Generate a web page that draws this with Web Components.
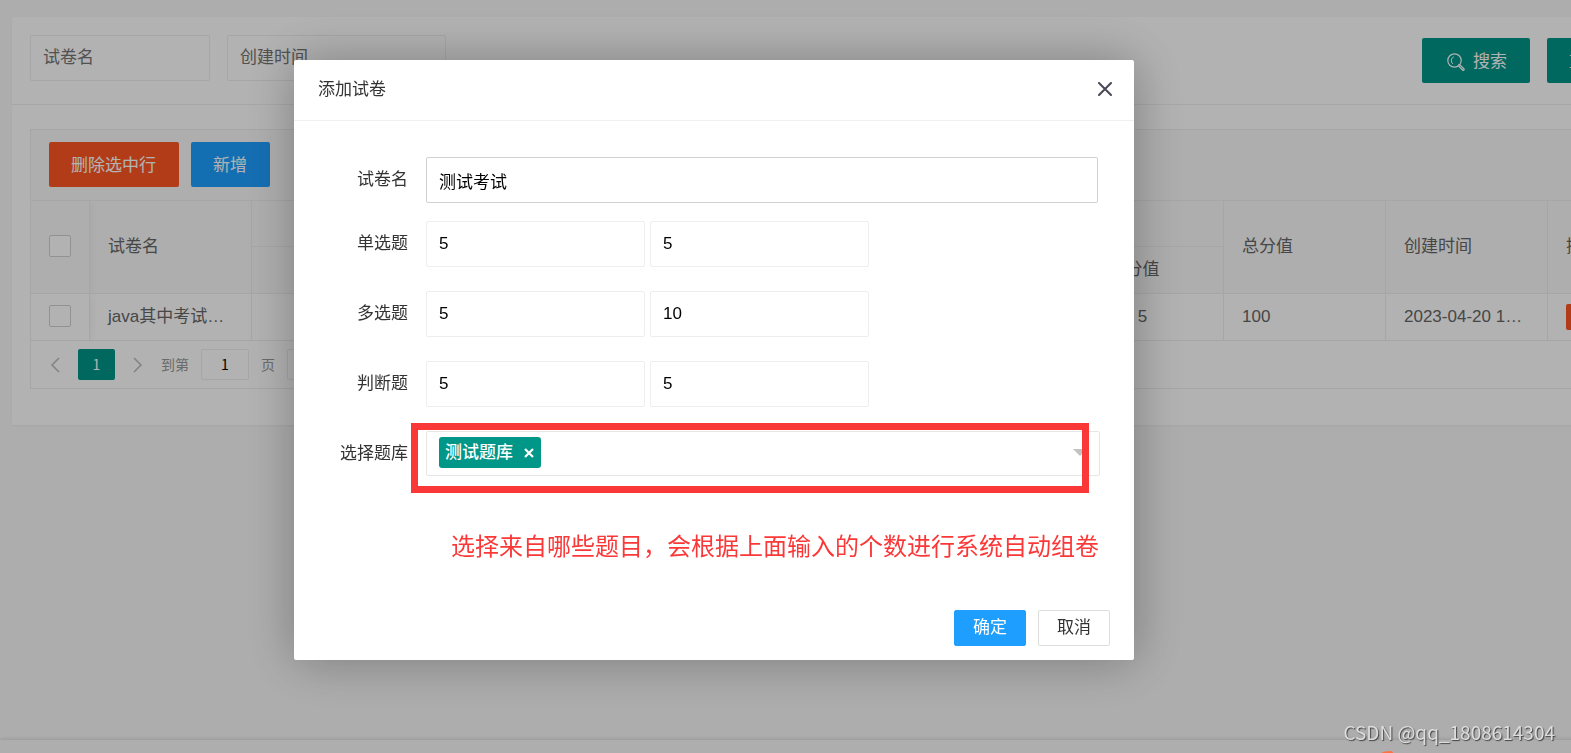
<!DOCTYPE html>
<html lang="zh-CN">
<head>
<meta charset="utf-8">
<title>试卷管理</title>
<style>
  html, body { margin: 0; height: 100%; overflow: hidden; }
  body {
    background: #f8f8f8;
    color: #333;
    font: 17px/24px "Liberation Sans", "Noto Sans CJK SC", sans-serif;
  }
</style>
</head>
<body>
<paper-page></paper-page>
<modal-dialog heading="添加试卷">
  <form-row label="试卷名" values="测试考试" wide></form-row>
  <form-row label="单选题" values="5,5"></form-row>
  <form-row label="多选题" values="5,10"></form-row>
  <form-row label="判断题" values="5,5"></form-row>
  <bank-select label="选择题库" tag="测试题库"></bank-select>
  <note-text>选择来自哪些题目，会根据上面输入的个数进行系统自动组卷</note-text>
  <ui-button slot="actions" kind="primary" compact>确定</ui-button>
  <ui-button slot="actions" kind="plain" compact>取消</ui-button>
</modal-dialog>
<water-mark>CSDN @qq_1808614304</water-mark>

<script>
const define = (name, render) => customElements.define(name, class extends HTMLElement {
  connectedCallback() {
    if (this.shadowRoot) return;
    this.attachShadow({ mode: 'open' }).innerHTML =
      '<style>*{box-sizing:border-box}input,button,select{font:inherit;margin:0}</style>' + render(this);
  }
});

define('ui-button', () => `
  <style>
    :host { display: block; flex: none; --bg: #009688; --fg: #fff; --line: transparent; }
    :host([kind=danger]) { --bg: #ff5722; }
    :host([kind=primary]) { --bg: #1e9fff; }
    :host([kind=plain]) { --bg: #fff; --fg: #333; --line: #dedede; }
    button {
      display: flex; align-items: center; justify-content: center; gap: 8px;
      height: 45px; padding: 2px 23px 0 22px; white-space: nowrap;
      background: var(--bg); color: var(--fg);
      border: 0; border-radius: 2px; cursor: pointer;
    }
    :host([icon]) button { min-width: 108px; padding: 2px 22px 0 24px; }
    :host([compact]) button { height: 36px; width: 72px; padding: 0; border: 1px solid var(--line); }
    :host([kind=primary][compact]) button { border-color: var(--bg); }
    :host([mini]) button { height: 26px; padding: 0 6px; font-size: 14px; }
  </style>
  <button type="button"><slot name="icon"></slot><slot></slot></button>`);

define('search-bar', () => `
  <style>
    :host { display: block; border-bottom: 1px solid #f0f0f0; }
    form { display: flex; align-items: center; gap: 17px; height: 87px; padding: 0 18px; }
    input {
      align-self: flex-start; margin-top: 18px; width: 180px; height: 46px; padding: 0 12px;
      border: 1px solid #eee; border-radius: 2px; background: #fff; outline: 0;
    }
    input.time { width: 219px; }
    input::placeholder { color: #757575; }
    .grow { flex: 1; }
    svg { display: block; width: 18px; height: 18px; }
  </style>
  <form>
    <input placeholder="试卷名" aria-label="试卷名">
    <input class="time" placeholder="创建时间" aria-label="创建时间">
    <span class="grow"></span>
    <ui-button icon>
      <svg slot="icon" viewBox="0 0 18 18" fill="none" stroke="#fff" stroke-linecap="round">
        <circle cx="7.5" cy="7.5" r="6.7" stroke-width="1.2"/>
        <path d="M6.5 4C4 5 3.500 8.500 5.500 10.600" stroke-width="1"/>
        <path d="M12.300 12.500 16.200 16.400" stroke-width="3"/>
        <path d="M12.600 12.800 16 16.200" stroke="#009688" stroke-width=".7"/>
      </svg>搜索</ui-button>
    <ui-button>重置</ui-button>
  </form>`);

define('paper-table', () => `
  <style>
    :host { display: block; }
    table { width: 100%; table-layout: fixed; border-spacing: 0; color: #666; line-height: 24px; }
    col.check { width: 59px; } col.data { width: 162px; }
    th, td {
      padding: 0 18px; text-align: left; font-weight: normal; white-space: nowrap; overflow: hidden;
      border-right: 1px solid #eee; border-bottom: 1px solid #eee;
    }
    thead { background: #fafafa; }
    th { height: 47px; }
    thead tr:first-child th:not([rowspan]) { height: 46px; }
    td { height: 47px; }
    .mid { text-align: center; }
    .fixed { overflow: visible; box-shadow: 1px 0 8px rgba(0,0,0,.06); clip-path: inset(0 -10px 0 0); }
    input {
      appearance: none; display: block; width: 22px; height: 22px;
      border: 1px solid #d2d2d2; border-radius: 2px; background: #fff;
    }
    .fixed input { margin-bottom: 2px; }
  </style>
  <table>
    <colgroup><col class="check"><col class="data" span="9"><col></colgroup>
    <thead>
      <tr>
        <th rowspan="2" class="fixed"><input type="checkbox" aria-label="全选"></th>
        <th rowspan="2">试卷名</th>
        <th colspan="2" class="mid">单选题</th>
        <th colspan="2" class="mid">多选题</th>
        <th colspan="2" class="mid">判断题</th>
        <th rowspan="2">总分值</th>
        <th rowspan="2">创建时间</th>
        <th rowspan="2">操作</th>
      </tr>
      <tr>${'<th class="mid">数量</th><th class="mid">分值</th>'.repeat(3)}</tr>
    </thead>
    <tbody>
      <tr>
        <td class="fixed"><input type="checkbox" aria-label="选择此行"></td>
        <td>java其中考试…</td>
        <td class="mid">5</td><td class="mid">5</td>
        <td class="mid">5</td><td class="mid">10</td>
        <td class="mid">5</td><td class="mid">5</td>
        <td>100</td>
        <td>2023-04-20 1…</td>
        <td><ui-button kind="danger" mini>删除</ui-button></td>
      </tr>
    </tbody>
  </table>`);

define('page-bar', () => `
  <style>
    :host {
      display: flex; align-items: center; height: 47px; padding-left: 17px; gap: 12px;
      font: 14px/31px "Noto Sans CJK SC", sans-serif; color: #999;
    }
    a { display: flex; width: 14px; height: 31px; align-items: center; justify-content: center; color: #bbb; }
    b { width: 37px; margin: 0 4px; font-weight: normal; text-align: center; background: #009688; color: #fff; border-radius: 2px; }
    label { display: flex; gap: 12px; margin-left: 4px; }
    input { width: 48px; height: 31px; padding: 0; text-align: center; color: #000; border: 1px solid #eee; border-radius: 2px; background: #fff; }
    button { height: 31px; padding: 0 12px; color: #333; border: 1px solid #eee; border-radius: 2px; background: #fff; }
    svg { width: 10px; height: 16px; }
  </style>
  <a href="#prev" aria-label="上一页"><svg viewBox="0 0 10 16" fill="none" stroke="currentColor" stroke-width="1.500"><path d="M9 1 2 8l7 7"/></svg></a>
  <b>1</b>
  <a href="#next" aria-label="下一页"><svg viewBox="0 0 10 16" fill="none" stroke="currentColor" stroke-width="1.500"><path d="m1 1 7 7-7 7"/></svg></a>
  <label>到第<input value="1">页</label>
  <button type="button">确定</button>`);

define('paper-page', () => `
  <style>
    :host { display: flex; flex-direction: column; width: calc(100% + 85px); height: calc(100% + 31px); }
    main { flex: 1; padding: 17px 12px; }
    .card { background: #fff; border-radius: 2px; box-shadow: 0 1px 2px rgba(0,0,0,.05); }
    .body { padding: 24px 18px 36px; }
    .grid { border: 1px solid #eee; }
    .tools { display: flex; gap: 12px; padding: 12px 18px 13px; background: #fafafa; border-bottom: 1px solid #eee; }
    footer { height: 44px; background: #fafafa; box-shadow: 0 -1px 4px rgba(0,0,0,.12); }
  </style>
  <main>
    <section class="card">
      <search-bar></search-bar>
      <div class="body">
        <div class="grid">
          <div class="tools">
            <ui-button kind="danger">删除选中行</ui-button>
            <ui-button kind="primary">新增</ui-button>
          </div>
          <paper-table></paper-table>
          <page-bar></page-bar>
        </div>
      </div>
    </section>
  </main>
  <footer></footer>`);

define('modal-dialog', el => `
  <style>
    :host { position: fixed; inset: 0; padding: 60px 0 0 294px; background: rgba(0,0,0,.3); }
    section {
      display: flex; flex-direction: column; width: 840px; min-height: 600px;
      background: #fff; border-radius: 2px; box-shadow: 1px 1px 50px rgba(0,0,0,.3);
    }
    header {
      display: flex; justify-content: space-between; align-items: center;
      height: 61px; padding: 0 20px 0 24px; border-bottom: 1px solid #f0f0f0;
    }
    h2 { margin: 0; font-size: 17px; font-weight: normal; }
    header button { display: flex; padding: 2px 2px 4px; border: 0; background: none; }
    .form { flex: 1; padding: 36px 36px 0 0; }
    footer { display: flex; justify-content: flex-end; gap: 12px; padding: 0 24px 14px; }
  </style>
  <section role="dialog" aria-label="${el.getAttribute('heading')}">
    <header>
      <h2>${el.getAttribute('heading')}</h2>
      <button type="button" aria-label="关闭">
        <svg width="14" height="14" viewBox="0 0 14 14" stroke="#4a4857" stroke-width="2" stroke-linecap="round"><path d="m1 1 12 12M13 1 1 13"/></svg>
      </button>
    </header>
    <div class="form"><slot></slot></div>
    <footer><slot name="actions"></slot></footer>
  </section>`);

const rowStyle = `
  :host { display: grid; grid-template-columns: 132px 1fr; margin-bottom: 24px; }
  label { padding-right: 18px; text-align: right; line-height: 46px; }`;

define('form-row', el => `
  <style>
    ${rowStyle}
    :host([wide]) { margin-bottom: 18px; }
    div { display: flex; gap: 5px; }
    input {
      width: 219px; height: 46px; padding: 0 12px; color: #000;
      border: 1px solid #eee; border-radius: 2px; outline: 0;
    }
    :host([wide]) input { width: 100%; border-color: #d2d2d2; }
  </style>
  <label for="v0">${el.getAttribute('label')}</label>
  <div>${el.getAttribute('values').split(',').map((v, i) =>
    `<input id="v${i}" value="${v}" aria-label="${el.getAttribute('label')}">`).join('')}</div>`);

define('bank-select', el => `
  <style>
    ${rowStyle}
    .box { position: relative; box-sizing: content-box; width: 100%; height: 43px; border: 1px solid #e6e6e6; border-radius: 2px; }
    select { appearance: none; width: 100%; height: 100%; border: 0; background: none; outline: 0; }
    .tag {
      position: absolute; left: 12px; top: 5px; height: 31px; padding: 0 7px 0 6px;
      display: flex; align-items: center; gap: 11px; font-weight: 500;
      background: #009688; color: #fff; border-radius: 3px;
    }
    .tag button { display: flex; padding: 0; border: 0; background: none; }
    .arrow { position: absolute; right: 12px; top: 17px; border: 7px solid transparent; border-top-color: #c2c2c2; border-bottom: 0; }
    .mark { position: absolute; left: -16px; right: 10px; top: -9px; height: 70px; border: 7px solid #fb3838; pointer-events: none; }
  </style>
  <label for="bank">${el.getAttribute('label')}</label>
  <div class="box">
    <select id="bank"><option></option></select>
    <span class="tag">${el.getAttribute('tag')}<button type="button" aria-label="移除">
      <svg width="10" height="10" viewBox="0 0 10 10" stroke="#fff" stroke-width="2.200"><path d="m1 1 8 8M9 1 1 9"/></svg></button></span>
    <span class="arrow"></span>
    <span class="mark"></span>
  </div>`);

define('note-text', () => `
  <style>
    :host { display: block; margin-top: 50px; padding-left: 157px; margin-right: -12px; color: #fb3838; font-size: 24px; line-height: 36px; white-space: nowrap; font-family: "Noto Sans CJK SC", sans-serif; }
  </style>
  <slot></slot>`);

define('water-mark', () => `
  <style>
    :host {
      position: fixed; right: 16px; bottom: 9px; color: #ddd; text-shadow: 1px 1px 1px #444;
      font: 19px/24px "Noto Sans CJK SC", sans-serif;
    }
    svg { position: absolute; left: 38px; bottom: -9px; }
  </style>
  <slot></slot>
  <svg width="12" height="2" viewBox="0 0 12 2"><path d="M0 2Q3 0 10 0 12 0 12 2z" fill="#ff7043"/></svg>`);
</script>
</body>
</html>
